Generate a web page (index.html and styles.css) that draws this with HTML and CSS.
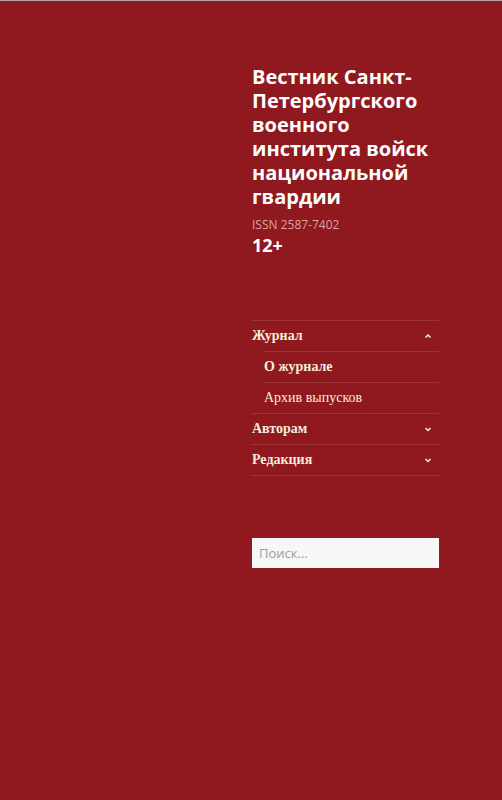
FILE: index.html
```html
<!DOCTYPE html>
<html lang="ru">
<head>
  <meta charset="UTF-8" />
  <meta name="viewport" content="width=device-width, initial-scale=1" />
  <title>Вестник Санкт-Петербургского военного института войск национальной гвардии</title>
  <link rel="stylesheet" href="styles.css">
</head>
<body>
  <div class="sidebar">
    <header class="site-header">
      <p class="site-title">Вестник Санкт-Петербургского военного института войск национальной гвардии</p>
      <p class="site-issn">ISSN 2587-7402</p>
      <p class="site-age">12+</p>
    </header>

    <nav class="main-nav">
      <ul class="menu">
        <li class="menu-item open">
          <div class="menu-row">
            <a href="#">Журнал</a>
            <span class="toggle">
              <svg width="8" height="8" viewBox="0 0 8 8"><path d="M1.5 5.5 L4 3 L6.5 5.5" fill="none" stroke="currentColor" stroke-width="1.5"/></svg>
            </span>
          </div>
          <ul class="sub-menu">
            <li class="menu-item current"><div class="menu-row"><a href="#">О журнале</a></div></li>
            <li class="menu-item"><div class="menu-row"><a href="#">Архив выпусков</a></div></li>
          </ul>
        </li>
        <li class="menu-item">
          <div class="menu-row">
            <a href="#">Авторам</a>
            <span class="toggle">
              <svg width="8" height="8" viewBox="0 0 8 8"><path d="M1.5 3 L4 5.5 L6.5 3" fill="none" stroke="currentColor" stroke-width="1.5"/></svg>
            </span>
          </div>
        </li>
        <li class="menu-item">
          <div class="menu-row">
            <a href="#">Редакция</a>
            <span class="toggle">
              <svg width="8" height="8" viewBox="0 0 8 8"><path d="M1.5 3 L4 5.5 L6.5 3" fill="none" stroke="currentColor" stroke-width="1.5"/></svg>
            </span>
          </div>
        </li>
      </ul>
    </nav>

    <form class="search-form">
      <input type="search" class="search-field" placeholder="Поиск...">
    </form>
  </div>
</body>
</html>
```

FILE: styles.css
```css
html {
  background: #8f191e;
}
body {
  margin: 0;
  min-height: 800px;
  box-sizing: border-box;
  border-top: 1px solid #b3a3a4;
  background: #8f191e;
  color: #fff;
  font-family: 'Open Sans', sans-serif;
}
.sidebar {
  width: 187px;
  margin-left: 252px;
  padding-top: 64px;
}
.site-header p {
  margin: 0;
}
.site-title {
  font-size: 20px;
  font-weight: 700;
  line-height: 24px;
  color: #fff;
}
.site-header .site-issn {
  margin-top: 8px;
  font-size: 12px;
  line-height: 16px;
  color: #d7a3a5;
}
.site-age {
  font-size: 18px;
  font-weight: 700;
  line-height: 24px;
}
.main-nav {
  margin-top: 63px;
}
.menu,
.sub-menu {
  list-style: none;
  margin: 0;
  padding: 0;
}
.menu {
  border-top: 1px solid rgba(255, 255, 255, 0.12);
}
.menu-item {
  border-bottom: 1px solid rgba(255, 255, 255, 0.12);
}
.sub-menu {
  margin-left: 12px;
  border-top: 1px solid rgba(255, 255, 255, 0.12);
}
.sub-menu .menu-item:last-child {
  border-bottom: none;
}
.menu-row {
  display: flex;
  align-items: center;
  justify-content: space-between;
  height: 30px;
}
.menu-row a {
  font-family: 'Liberation Serif', serif;
  font-size: 14px;
  color: #f4ecdf;
  text-decoration: none;
}
.menu > .menu-item > .menu-row a {
  font-weight: 700;
}
.sub-menu .menu-item .menu-row a {
  font-weight: 400;
}
.sub-menu .current .menu-row a {
  font-weight: 700;
}
.toggle {
  display: flex;
  width: 8px;
  margin-right: 7px;
  color: #f4ecdf;
}
.search-form {
  margin-top: 62px;
}
.search-field {
  display: block;
  width: 100%;
  height: 30px;
  box-sizing: border-box;
  border: none;
  padding: 0 7px;
  background: #f7f7f7;
  font-family: 'Open Sans', sans-serif;
  font-size: 13px;
  color: #333;
}
.search-field::placeholder {
  color: #9a9ba6;
}
```
